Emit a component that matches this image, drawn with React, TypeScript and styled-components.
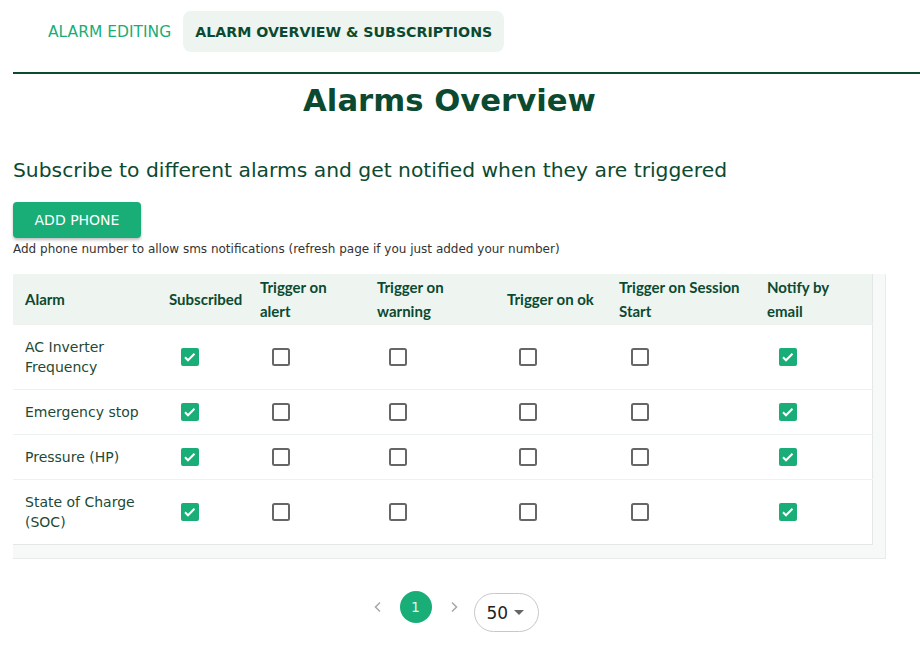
import React from "react";
import styled, { createGlobalStyle } from "styled-components";

const GREEN = "#19ad77";
const DARK = "#0b4a30";

const GlobalStyle = createGlobalStyle`
  body {
    margin: 0;
    background: #fff;
    font-family: "DejaVu Sans", sans-serif;
    color: ${DARK};
  }
`;

const Page = styled.div`
  padding: 11px 0 20px 13px;
  width: 873px;
`;

const Tabs = styled.div`
  display: flex;
  margin-left: 23px;
`;

const Tab = styled.div<{ $active?: boolean }>`
  height: 41px;
  display: flex;
  align-items: center;
  padding: 0 12px;
  border-radius: 8px;
  font-size: ${(p) => (p.$active ? "14.2px" : "15.5px")};
  text-transform: uppercase;
  font-family: "DejaVu Sans", sans-serif;
  color: ${(p) => (p.$active ? DARK : GREEN)};
  font-weight: ${(p) => (p.$active ? 700 : 400)};
  background: ${(p) => (p.$active ? "#eef5f1" : "transparent")};
`;

const Divider = styled.div`
  margin-top: 20px;
  height: 2px;
  width: 907px;
  background: ${DARK};
`;

const Title = styled.h1`
  margin: 7px 0 0;
  text-align: center;
  font-size: 30.7px;
  line-height: 40px;
  font-weight: 700;
`;

const Subtitle = styled.h2`
  margin: 36px 0 0;
  font-size: 20.3px;
  line-height: 26px;
  font-weight: 400;
`;

const AddButton = styled.button`
  margin-top: 19px;
  height: 36px;
  width: 128px;
  border: none;
  border-radius: 4px;
  background: ${GREEN};
  color: #fff;
  font-family: "DejaVu Sans", sans-serif;
  font-size: 14px;
  box-shadow: 0 2px 3px rgba(0, 0, 0, 0.25);
`;

const Hint = styled.div`
  margin-top: 3px;
  font-size: 12px;
  line-height: 16px;
  color: #333;
`;

const TableFrame = styled.div`
  margin-top: 17px;
  width: 873px;
  box-sizing: border-box;
  padding: 0 13px 13px 0;
  background: #f7f8f8;
  border-right: 1px solid #e8ebea;
  border-bottom: 1px solid #e8ebea;
`;

const Table = styled.table`
  width: 859px;
  border-collapse: collapse;
  background: #fff;
  border-right: 1px solid #e3e8e6;
  border-bottom: 1px solid #e3e8e6;
  table-layout: fixed;
`;

const Th = styled.th`
  background: #eef5f1;
  text-align: left;
  vertical-align: middle;
  padding: 1px 12px;
  height: 48px;
  font-family: Lato, sans-serif;
  font-size: 15px;
  line-height: 24px;
  font-weight: 700;
  color: ${DARK};
`;

const Td = styled.td<{ $check?: boolean }>`
  padding: ${(p) => (p.$check ? "10px 12px" : "12px")};
  font-size: 14px;
  line-height: 20px;
  color: #1d4a36;
  border-top: 1px solid #edf1ef;
  vertical-align: middle;
`;

const BoxWrap = styled.span`
  display: block;
  height: 24px;
  padding: 0 9px;
  svg {
    display: block;
  }
`;

function CheckBox({ checked }: { checked: boolean }) {
  return (
    <BoxWrap>
      {checked ? (
        <svg width="24" height="24" viewBox="0 0 24 24">
          <rect x="3" y="3" width="18" height="18" rx="2" fill={GREEN} />
          <path d="M7 12.3l3 3 6.5-6.6" fill="none" stroke="#fff" strokeWidth="2" />
        </svg>
      ) : (
        <svg width="24" height="24" viewBox="0 0 24 24">
          <rect x="4" y="4" width="16" height="16" rx="1.5" fill="none" stroke="#666" strokeWidth="2" />
        </svg>
      )}
    </BoxWrap>
  );
}

const Pager = styled.div`
  display: flex;
  align-items: flex-start;
  justify-content: center;
  margin: 32px 0 0 5px;
  gap: 10px;
`;

const Arrow = styled.span`
  width: 24px;
  height: 32px;
  display: flex;
  align-items: center;
  justify-content: center;
`;

const PageDot = styled.div`
  width: 32px;
  height: 32px;
  border-radius: 50%;
  background: ${GREEN};
  color: #dff5ea;
  display: flex;
  align-items: center;
  justify-content: center;
  font-size: 14px;
`;

const Select = styled.div`
  width: 65px;
  height: 39px;
  margin: 2px 0 0 -2px;
  box-sizing: border-box;
  border: 1px solid #c8c8c8;
  border-radius: 20px;
  display: flex;
  align-items: center;
  padding-left: 12px;
  gap: 6px;
  font-size: 17px;
  color: #222;
`;

const columns = [
  { label: "Alarm", width: 144 },
  { label: "Subscribed", width: 91 },
  { label: "Trigger on alert", width: 117 },
  { label: "Trigger on warning", width: 130 },
  { label: "Trigger on ok", width: 112 },
  { label: "Trigger on Session Start", width: 148 },
  { label: "Notify by email", width: 117 },
];

const rows = [
  "AC Inverter Frequency",
  "Emergency stop",
  "Pressure (HP)",
  "State of Charge (SOC)",
];

// which flag columns are ticked for every alarm
const flags = [true, false, false, false, false, true];

const Chevron = ({ dir }: { dir: "l" | "r" }) => (
  <svg width="10" height="12" viewBox="0 0 10 12">
    <path
      d={dir === "l" ? "M7 1.5L2.5 6 7 10.5" : "M3 1.5L7.5 6 3 10.5"}
      fill="none"
      stroke="#aaa"
      strokeWidth="1.6"
    />
  </svg>
);

export default function App() {
  return (
    <>
      <GlobalStyle />
      <Page>
        <Tabs>
          <Tab>Alarm Editing</Tab>
          <Tab $active>Alarm Overview &amp; Subscriptions</Tab>
        </Tabs>
        <Divider />
        <Title>Alarms Overview</Title>
        <Subtitle>Subscribe to different alarms and get notified when they are triggered</Subtitle>
        <AddButton>ADD PHONE</AddButton>
        <Hint>Add phone number to allow sms notifications (refresh page if you just added your number)</Hint>
        <TableFrame>
          <Table>
            <colgroup>
              {columns.map((c) => (
                <col key={c.label} style={{ width: c.width }} />
              ))}
            </colgroup>
            <thead>
              <tr>
                {columns.map((c) => (
                  <Th key={c.label}>{c.label}</Th>
                ))}
              </tr>
            </thead>
            <tbody>
              {rows.map((r) => (
                <tr key={r}>
                  <Td>{r}</Td>
                  {flags.map((f, i) => (
                    <Td $check key={i}>
                      <CheckBox checked={f} />
                    </Td>
                  ))}
                </tr>
              ))}
            </tbody>
          </Table>
        </TableFrame>
        <Pager>
          <Arrow><Chevron dir="l" /></Arrow>
          <PageDot>1</PageDot>
          <Arrow><Chevron dir="r" /></Arrow>
          <Select>
            50
            <svg width="10" height="6" viewBox="0 0 10 6">
              <path d="M0 0h10L5 5z" fill="#666" />
            </svg>
          </Select>
        </Pager>
      </Page>
    </>
  );
}
